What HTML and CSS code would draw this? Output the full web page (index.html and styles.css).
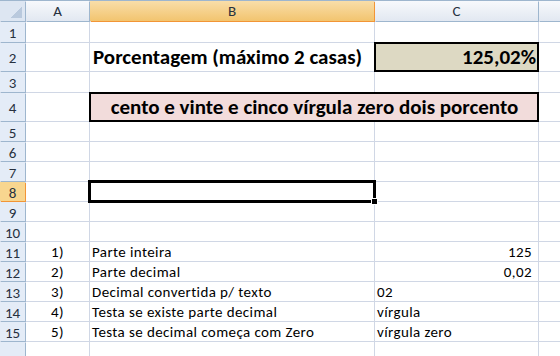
FILE: index.html
```html
<!DOCTYPE html>
<html lang="pt">
  <head>
    <meta charset="UTF-8">
    <title>Porcentagem por extenso</title>
    <link rel="stylesheet" href="styles.css">
  </head>
  <body>
    <div class="planilha">
      <!-- cabeçalho das colunas -->
      <div class="canto"></div>
      <div class="col-cab">A</div>
      <div class="col-cab ativo">B</div>
      <div class="col-cab">C</div>
      <div class="col-cab"></div>

      <div class="lin-cab">1</div>
      <div class="cel"></div><div class="cel"></div><div class="cel"></div><div class="cel"></div>

      <div class="lin-cab alta">2</div>
      <div class="cel"></div>
      <div class="cel titulo">Porcentagem (máximo 2 casas)</div>
      <div class="cel titulo num valor">125,02%</div>
      <div class="cel"></div>

      <div class="lin-cab">3</div>
      <div class="cel"></div><div class="cel"></div><div class="cel"></div><div class="cel"></div>

      <div class="lin-cab alta">4</div>
      <div class="cel"></div>
      <div class="cel titulo extenso">cento e vinte e cinco vírgula zero dois porcento</div>
      <div class="cel"></div>

      <div class="lin-cab">5</div>
      <div class="cel"></div><div class="cel"></div><div class="cel"></div><div class="cel"></div>
      <div class="lin-cab">6</div>
      <div class="cel"></div><div class="cel"></div><div class="cel"></div><div class="cel"></div>
      <div class="lin-cab">7</div>
      <div class="cel"></div><div class="cel"></div><div class="cel"></div><div class="cel"></div>

      <div class="lin-cab ativo">8</div>
      <div class="cel"></div><div class="cel selecionada"></div><div class="cel"></div><div class="cel"></div>

      <div class="lin-cab">9</div>
      <div class="cel"></div><div class="cel"></div><div class="cel"></div><div class="cel"></div>
      <div class="lin-cab">10</div>
      <div class="cel"></div><div class="cel"></div><div class="cel"></div><div class="cel"></div>

      <div class="lin-cab">11</div>
      <div class="cel passo">1)</div>
      <div class="cel">Parte inteira</div>
      <div class="cel num recuo">125</div>
      <div class="cel"></div>

      <div class="lin-cab">12</div>
      <div class="cel passo">2)</div>
      <div class="cel">Parte decimal</div>
      <div class="cel num recuo">0,02</div>
      <div class="cel"></div>

      <div class="lin-cab">13</div>
      <div class="cel passo">3)</div>
      <div class="cel">Decimal convertida p/ texto</div>
      <div class="cel">02</div>
      <div class="cel"></div>

      <div class="lin-cab">14</div>
      <div class="cel passo">4)</div>
      <div class="cel">Testa se existe parte decimal</div>
      <div class="cel">vírgula</div>
      <div class="cel"></div>

      <div class="lin-cab">15</div>
      <div class="cel passo">5)</div>
      <div class="cel">Testa se decimal começa com Zero</div>
      <div class="cel">vírgula zero</div>
      <div class="cel"></div>

      <div class="lin-cab">16</div>
      <div class="cel"></div><div class="cel"></div><div class="cel"></div><div class="cel"></div>
    </div>
  </body>
</html>
```

FILE: styles.css
```css
html, body {
  margin: 0;
  background: #fff;
}
body {
  font-family: Calibri, Lato, sans-serif;
  font-size: 15px;
  letter-spacing: 0.4px;
  color: #000;
  overflow: hidden;
}
.planilha {
  display: grid;
  grid-template-columns: 25px 63px 284px 163px 1fr;
  grid-template-rows: 20px 20px 28px 20px 28px repeat(11, 19px);
  gap: 1px;
  background: #d0d7e5;
  border-top: 1px solid #9eb6ce;
  height: 400px;
}
.canto, .col-cab, .lin-cab {
  box-shadow: 1px 1px 0 #9eb6ce;
  color: #27313f;
  font-size: 15px;
  letter-spacing: 0;
  display: flex;
  align-items: center;
  justify-content: center;
}
.canto {
  background:
    linear-gradient(to bottom right, transparent 50%, #b9c9dd 50%) no-repeat right 3px bottom 3px / 11px 11px,
    #dde6f2;
}
.col-cab {
  background: linear-gradient(#f7f9fc, #e2e8f1);
}
.col-cab.ativo {
  background: linear-gradient(#f9dea9, #f2c46f);
  box-shadow: 1px 1px 0 #f29536;
}
.lin-cab {
  background: #e4ecf7;
  padding-top: 2px;
}
.lin-cab.ativo {
  background: #f8d68f;
  box-shadow: 1px 1px 0 #f29536;
}
.cel {
  background: #fff;
  display: flex;
  align-items: flex-end;
  padding: 0 2px 0;
  white-space: nowrap;
  min-width: 0;
}
.passo {
  justify-content: center;
}
.num {
  justify-content: flex-end;
}
.recuo {
  padding-right: 6px;
}
.titulo {
  font-weight: bold;
  font-size: 21px;
  letter-spacing: 0;
  padding-bottom: 1px;
  padding-left: 3px;
}
.valor {
  background: #ddd9c3;
  outline: 2px solid #000;
  outline-offset: -1px;
}
.extenso {
  grid-column: span 2;
  justify-content: center;
  background: #f2dcdb;
  outline: 2px solid #000;
  outline-offset: -1px;
}
.selecionada {
  position: relative;
  outline: 3px solid #000;
  outline-offset: -1px;
}
/* alça de preenchimento no canto da seleção */
.selecionada::after {
  content: "";
  position: absolute;
  right: -4px;
  bottom: -4px;
  width: 5px;
  height: 5px;
  background: #000;
  border: 1px solid #fff;
  z-index: 2;
}
```
